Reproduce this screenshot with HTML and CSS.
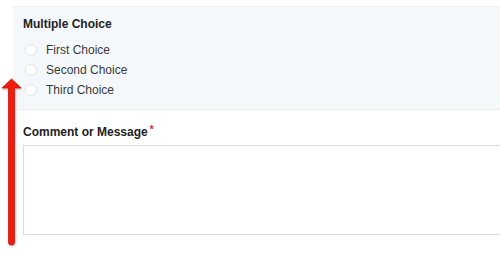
FILE: index.html
```html
<!DOCTYPE html>
<html>
<head>
<meta charset="utf-8">
<link rel="stylesheet" href="styles.css">
</head>
<body>
<div class="form">
  <fieldset class="choice-field">
    <div class="field-label">Multiple Choice</div>
    <ul class="choices">
      <li class="choice"><span class="radio"></span><span class="choice-text">First Choice</span></li>
      <li class="choice"><span class="radio"></span><span class="choice-text">Second Choice</span></li>
      <li class="choice"><span class="radio"></span><span class="choice-text">Third Choice</span></li>
    </ul>
  </fieldset>
  <div class="message-field">
    <div class="field-label">Comment or Message<span class="req">*</span></div>
    <div class="textarea"></div>
  </div>
</div>
<svg class="arrow" width="24" height="172" viewBox="0 0 24 172">
  <defs>
    <filter id="sh" x="-50%" y="-10%" width="200%" height="120%">
      <feDropShadow dx="0.5" dy="1" stdDeviation="1" flood-color="#000" flood-opacity="0.3"/>
    </filter>
  </defs>
  <g filter="url(#sh)">
    <path d="M11.5 3 L21 12 L14.5 12 L14.5 166 Q14.5 169 11.5 169 Q8.5 169 8.5 166 L8.5 12 L2 12 Z" fill="#f21b0a" stroke="#c4140a" stroke-width="0.8" stroke-linejoin="round"/>
  </g>
</svg>
</body>
</html>
```
FILE: styles.css
```css
html, body {
  margin: 0;
  padding: 0;
  background: #fff;
  font-family: "Liberation Sans", Arial, Helvetica, sans-serif;
  color: #333;
  overflow: hidden;
  width: 500px;
  height: 255px;
}
.form {
  padding: 6px 0 0 13px;
}
.choice-field {
  margin: 0;
  border: 0;
  border-top: 1px solid #eef0f2;
  border-bottom: 1px solid #eaecee;
  background: #f5f8fb;
  padding: 9px 0 11px 10px;
  height: 82px;
}
.field-label {
  font-weight: bold;
  font-size: 12px;
  line-height: 16px;
  color: #222;
}
.choices {
  list-style: none;
  margin: 8px 0 0;
  padding: 0;
}
.choice {
  display: flex;
  align-items: center;
  height: 20px;
}
.radio {
  width: 12px;
  height: 12px;
  border-radius: 50%;
  border: 1px solid #e3e5e8;
  background: #fff;
  box-sizing: border-box;
  margin-left: 2px;
}
.choice-text {
  margin-left: 9px;
  font-size: 12px;
  color: #3a3a3a;
}
.message-field {
  padding: 14px 0 0 10px;
}
.req {
  color: #e3231b;
  font-size: 10px;
  vertical-align: top;
  margin-left: 2px;
  line-height: 12px;
}
.textarea {
  margin-top: 5px;
  height: 88px;
  border: 1px solid #dcdcdc;
  border-right: 0;
  background: #fff;
}
.arrow {
  position: absolute;
  left: 0;
  top: 76px;
}
```
